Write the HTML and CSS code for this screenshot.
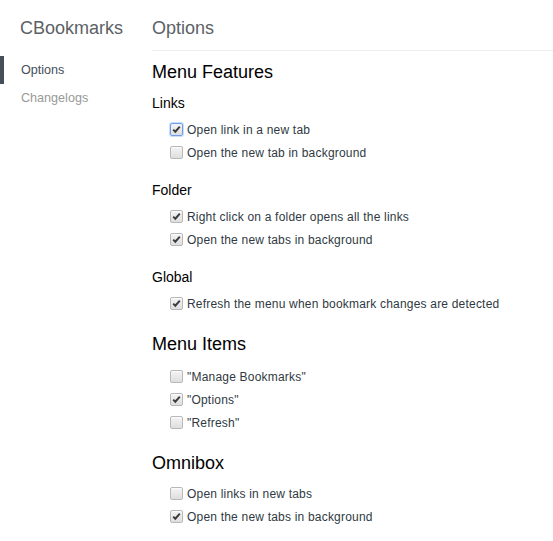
FILE: index.html
```html
<!DOCTYPE html>
<html lang="en">
<head>
  <meta charset="UTF-8">
  <title>CBookmarks - Options</title>
  <link rel="stylesheet" href="styles.css">
</head>
<body>

<div class="page">
  <div class="sidebar">
    <h1 class="title">CBookmarks</h1>
    <ul class="nav">
      <li class="selected"><a href="#">Options</a></li>
      <li><a href="#">Changelogs</a></li>
    </ul>
  </div>

  <div class="main">
    <header>
      <h1 class="title">Options</h1>
    </header>

    <section>
      <h2>Menu Features</h2>

      <div class="group">
        <h3>Links</h3>
        <label class="check focused"><span class="box on"><svg viewBox="0 0 13 13"><path d="M2.6 6.6 L5.1 9.1 L10.4 3"/></svg></span>Open link in a new tab</label>
        <label class="check"><span class="box"></span>Open the new tab in background</label>
      </div>

      <div class="group">
        <h3>Folder</h3>
        <label class="check"><span class="box on"><svg viewBox="0 0 13 13"><path d="M2.6 6.6 L5.1 9.1 L10.4 3"/></svg></span>Right click on a folder opens all the links</label>
        <label class="check"><span class="box on"><svg viewBox="0 0 13 13"><path d="M2.6 6.6 L5.1 9.1 L10.4 3"/></svg></span>Open the new tabs in background</label>
      </div>

      <div class="group">
        <h3>Global</h3>
        <label class="check"><span class="box on"><svg viewBox="0 0 13 13"><path d="M2.6 6.6 L5.1 9.1 L10.4 3"/></svg></span>Refresh the menu when bookmark changes are detected</label>
      </div>
    </section>

    <section>
      <h2>Menu Items</h2>
      <label class="check"><span class="box"></span>"Manage Bookmarks"</label>
      <label class="check"><span class="box on"><svg viewBox="0 0 13 13"><path d="M2.6 6.6 L5.1 9.1 L10.4 3"/></svg></span>"Options"</label>
      <label class="check"><span class="box"></span>"Refresh"</label>
    </section>

    <section class="omnibox">
      <h2>Omnibox</h2>
      <label class="check"><span class="box"></span>Open links in new tabs</label>
      <label class="check"><span class="box on"><svg viewBox="0 0 13 13"><path d="M2.6 6.6 L5.1 9.1 L10.4 3"/></svg></span>Open the new tabs in background</label>
    </section>
  </div>
</div>

</body>
</html>
```

FILE: styles.css
```css
body {
  margin: 0;
  background: white;
  font-family: "Liberation Sans", Arial, sans-serif;
  color: #303942;
}
.page {
  display: flex;
}
.title {
  font-size: 18px;
  font-weight: normal;
  line-height: 24px;
  color: #5c6166;
  margin: 0;
}
.sidebar {
  width: 152px;
  flex-shrink: 0;
}
.sidebar .title {
  padding: 16px 0 0 20px;
  margin-bottom: 16px;
}
.nav {
  list-style: none;
  margin: 0;
  padding: 0;
}
.nav li {
  border-left: 4px solid transparent;
  padding-left: 17px;
  height: 28px;
  line-height: 29px;
  font-size: 12.6px;
}
.nav a {
  color: #999;
  text-decoration: none;
}
.nav li.selected {
  border-left-color: #464e5a;
}
.nav li.selected a {
  color: #464e5a;
}
.main {
  flex: 1;
}
header {
  padding: 16px 0 10px 0;
  border-bottom: 1px solid #eee;
  margin-bottom: 9px;
}
section {
  margin-bottom: 17px;
}
h2 {
  font-size: 18px;
  font-weight: normal;
  line-height: 24px;
  color: #000;
  margin: 0 0 9px 0;
}
.omnibox h2 {
  margin-bottom: 7px;
}
h3 {
  font-size: 14px;
  font-weight: normal;
  line-height: 20px;
  color: #000;
  margin: 0 0 5px 0;
}
.group {
  margin-bottom: 16px;
}
.group:last-child {
  margin-bottom: 0;
}
.check {
  display: flex;
  align-items: center;
  height: 23px;
  padding-left: 18px;
  font-size: 12px;
  letter-spacing: 0.2px;
  color: #303942;
}
.box {
  width: 11px;
  height: 11px;
  margin-right: 4px;
  border: 1px solid #b8b8b8;
  border-radius: 2px;
  background: linear-gradient(#f4f4f4, #dedede);
  box-shadow: inset 0 1px 1px rgba(255, 255, 255, 0.8);
  display: flex;
  flex-shrink: 0;
}
.box svg {
  width: 11px;
  height: 11px;
}
.box path {
  fill: none;
  stroke: #3c3c3c;
  stroke-width: 2.3;
}
.focused .box {
  border-color: #6d9de6;
  box-shadow: 0 0 0 1px rgba(77, 144, 254, 0.3);
}
```
